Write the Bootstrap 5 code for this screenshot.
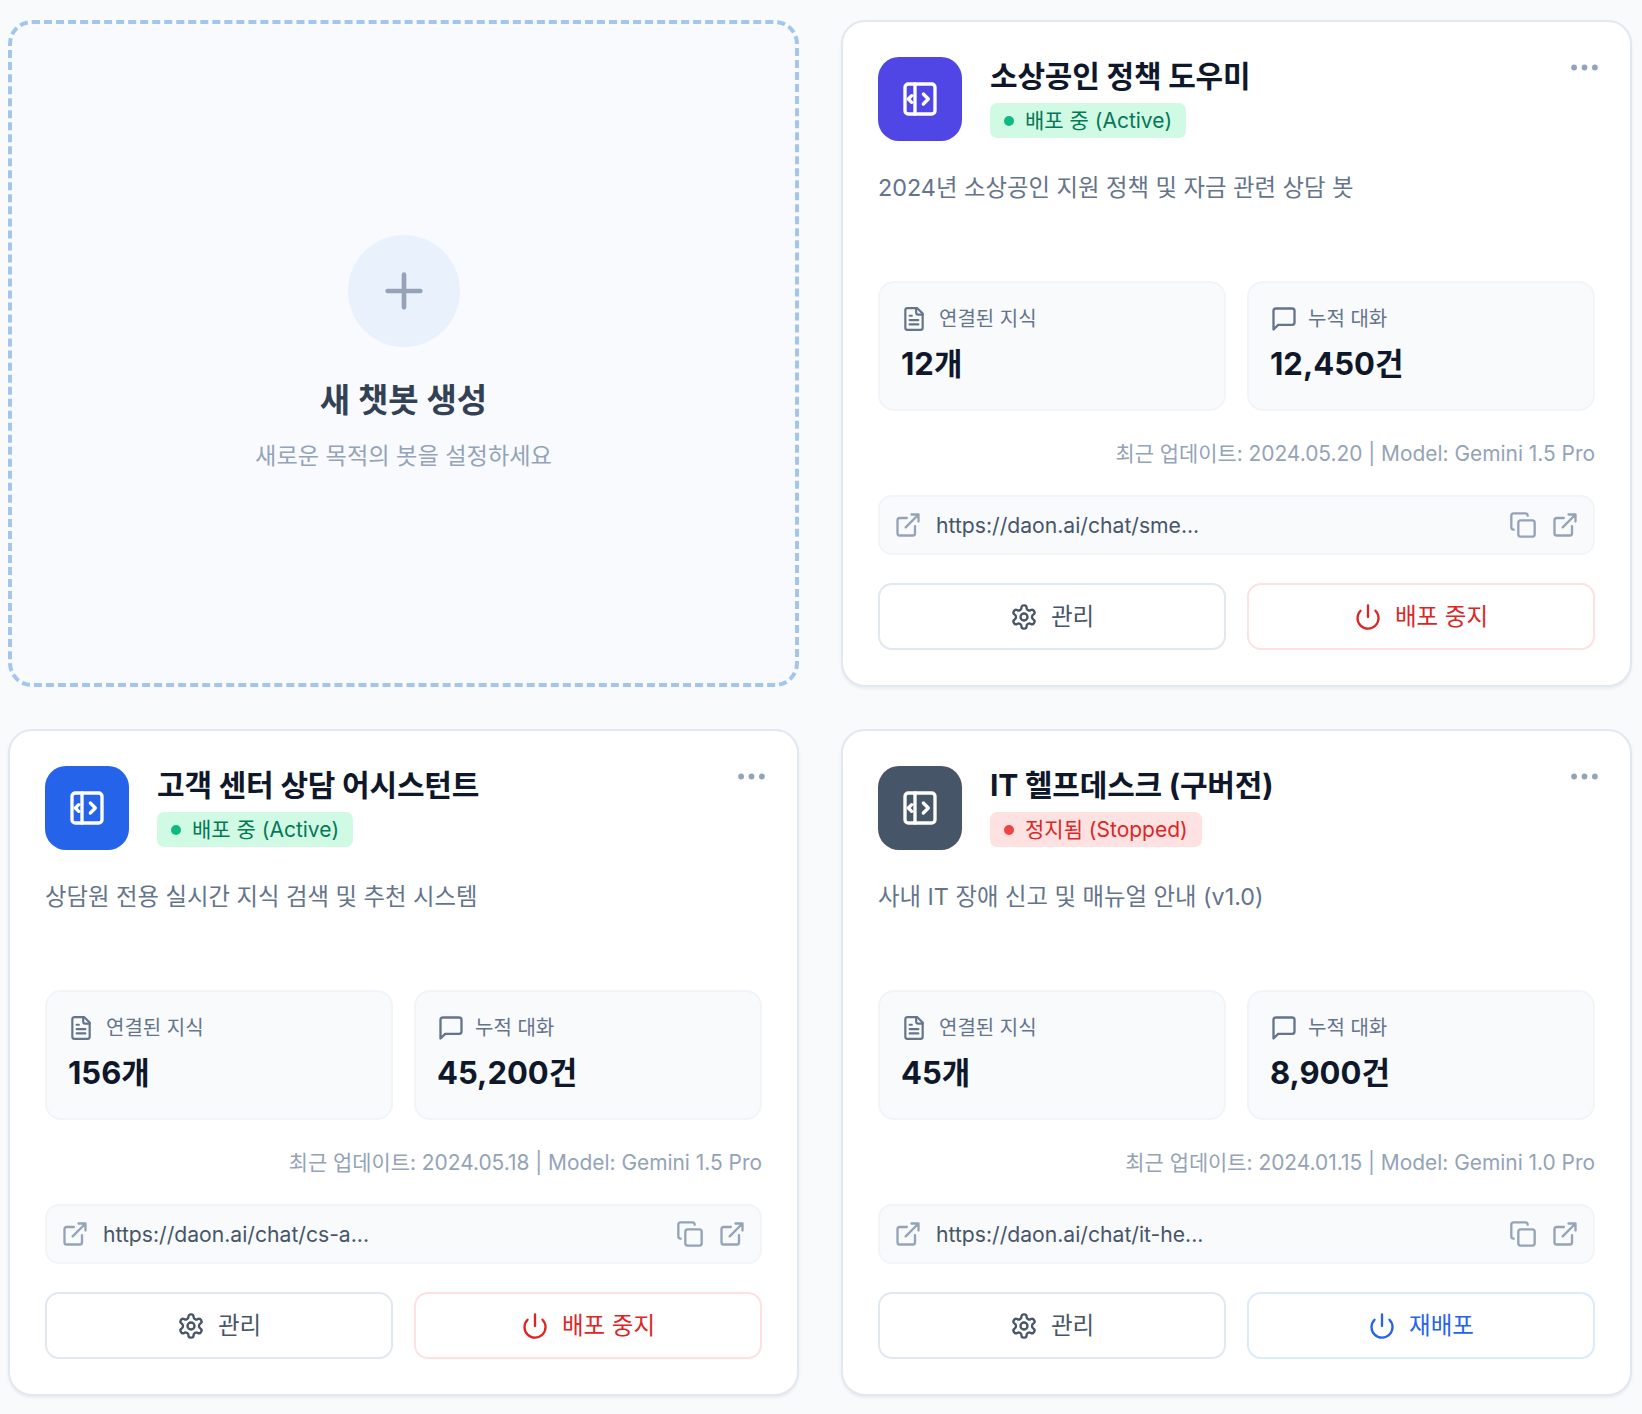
<!DOCTYPE html>
<html lang="ko">
<head>
<meta charset="utf-8">
<title>챗봇 관리</title>
<link href="https://cdn.jsdelivr.net/npm/bootstrap@5.3.0/dist/css/bootstrap.min.css" rel="stylesheet">
<style>
body{background:#f8fafc;font-family:Inter,"Noto Sans CJK KR",sans-serif;color:#0f172a}
.bot-grid{display:grid;grid-template-columns:791px 791px;gap:42px 42px;padding:20px 10px 20px 8px}
.bot-card{height:667px;border:2px solid #e2e8f0;border-radius:24px;padding:35px;background:#fff;box-shadow:0 2px 3px rgba(15,23,42,.06)}
.add-card{height:667px;border:4px dashed #a3c6ef;border-radius:24px;background:#f8fafe}
.add-circle{width:112px;height:112px;border-radius:50%;background:#e9f1fc;color:#94a3b8}
.add-title{font-size:33px;font-weight:700;color:#334155;margin:31px 0 0;line-height:44px}
.add-sub{font-size:23.2px;color:#94a3b8;margin:17px 0 0;line-height:34px}
.bot-icon{width:84px;height:84px;border-radius:21px;color:#fff;flex:none}
.ic-indigo{background:#4f46e5}.ic-blue{background:#2563eb}.ic-slate{background:#475569}
.bot-head-row{gap:28px}
.bot-title{font-size:30px;font-weight:700;line-height:38px;margin:0 0 8px;letter-spacing:-.2px}
.bot-status{display:inline-flex;align-items:center;gap:11px;height:35px;padding:0 14px;border-radius:7px;font-size:21px}
.st-on{background:#d1fae5;color:#047857}.st-off{background:#fee2e2;color:#dc2626}
.st-dot{width:10px;height:10px;border-radius:50%}
.st-on .st-dot{background:#10b981}.st-off .st-dot{background:#ef4444}
.more-btn{top:7px;right:-3px;line-height:0;position:absolute}
.bot-desc{font-size:23.35px;color:#64748b;line-height:34px;margin:30px 0 0;height:111px}
.stat-row,.act-row{display:grid;grid-template-columns:1fr 1fr;gap:21px}
.stat-box{height:130px;border:2px solid #f1f5f9;border-radius:16px;background:#f8fafc;padding:21px 21px}
.stat-label{font-size:20px;color:#64748b;line-height:30px}
.stat-msg{margin-left:2px}
.stat-val{font-size:31px;font-weight:700;line-height:44px;margin-top:8px}
.bot-meta{font-size:20.9px;color:#94a3b8;text-align:right;line-height:30px;margin:28px 0 0}
.url-box{height:60px;margin-top:26px;border:2px solid #f1f5f9;border-radius:14px;background:#f8fafc;padding:0 14px 0 14px;color:#94a3b8}
.url-text{font-size:21.15px;color:#475569;margin-left:14px;padding-top:2px}
.url-tools{gap:14px}
.act-row{margin-top:28px}
.act-btn{height:67px;border-width:2px;border-radius:14px;font-size:23.5px;background:#fff;gap:13px}
.act-manage{border-color:#e2e8f0;color:#475569}
.act-stop{border-color:#fee2e2;color:#dc2626}
.act-run{border-color:#dbeafe;color:#2563eb}
.ico{fill:none;stroke:currentColor;stroke-width:2;stroke-linecap:round;stroke-linejoin:round;flex:none}
</style>
</head>
<body>
<svg width="0" height="0" class="d-none">
<symbol id="i-panel" viewBox="0 0 24 24"><rect x="3" y="3" width="18" height="18" rx="2"/><path d="M9 3v18M7 10l-2 2 2 2M14 9l3 3-3 3"/></symbol>
<symbol id="i-file" viewBox="0 0 24 24"><path d="M15 2H6a2 2 0 0 0-2 2v16a2 2 0 0 0 2 2h12a2 2 0 0 0 2-2V7z"/><path d="M14 2v4a2 2 0 0 0 2 2h4M10 9H8M16 13H8M16 17H8"/></symbol>
<symbol id="i-msg" viewBox="0 0 24 24"><path d="M21 15a2 2 0 0 1-2 2H7l-4 4V5a2 2 0 0 1 2-2h14a2 2 0 0 1 2 2z"/></symbol>
<symbol id="i-ext" viewBox="0 0 24 24"><path d="M15 3h6v6M10 14 21 3M18 13v6a2 2 0 0 1-2 2H5a2 2 0 0 1-2-2V8a2 2 0 0 1 2-2h6"/></symbol>
<symbol id="i-copy" viewBox="0 0 24 24"><rect x="8" y="8" width="14" height="14" rx="2"/><path d="M4 16c-1.100 0-2-.9-2-2V4c0-1.100.9-2 2-2h10c1.100 0 2 .9 2 2"/></symbol>
<symbol id="i-gear" viewBox="0 0 24 24"><path d="M12.220 2h-.44a2 2 0 0 0-2 2v.18a2 2 0 0 1-1 1.730l-.43.25a2 2 0 0 1-2 0l-.15-.08a2 2 0 0 0-2.730.73l-.22.38a2 2 0 0 0 .73 2.730l.15.1a2 2 0 0 1 1 1.720v.51a2 2 0 0 1-1 1.740l-.15.09a2 2 0 0 0-.73 2.730l.22.38a2 2 0 0 0 2.730.73l.15-.08a2 2 0 0 1 2 0l.43.25a2 2 0 0 1 1 1.730V20a2 2 0 0 0 2 2h.44a2 2 0 0 0 2-2v-.18a2 2 0 0 1 1-1.730l.43-.25a2 2 0 0 1 2 0l.15.08a2 2 0 0 0 2.730-.73l.22-.39a2 2 0 0 0-.73-2.730l-.15-.08a2 2 0 0 1-1-1.740v-.5a2 2 0 0 1 1-1.740l.15-.09a2 2 0 0 0 .73-2.730l-.22-.38a2 2 0 0 0-2.730-.73l-.15.08a2 2 0 0 1-2 0l-.43-.25a2 2 0 0 1-1-1.730V4a2 2 0 0 0-2-2z"/><circle cx="12" cy="12" r="3"/></symbol>
<symbol id="i-power" viewBox="0 0 24 24"><path d="M12 2v10M18.400 6.600a9 9 0 1 1-12.770.04"/></symbol>
<symbol id="i-dots" viewBox="0 0 26 6"><circle cx="3" cy="3" r="2.800"/><circle cx="13" cy="3" r="2.800"/><circle cx="23" cy="3" r="2.800"/></symbol>
</svg>

<main class="bot-grid">
  <section class="add-card d-flex flex-column align-items-center justify-content-center">
    <div class="add-circle d-flex align-items-center justify-content-center">
      <svg class="ico" width="56" height="56" viewBox="0 0 24 24"><path d="M5 12h14M12 5v14"/></svg>
    </div>
    <h3 class="add-title">새 챗봇 생성</h3>
    <p class="add-sub">새로운 목적의 봇을 설정하세요</p>
  </section>

  <article class="bot-card d-flex flex-column">
    <div class="d-flex bot-head-row position-relative">
      <div class="bot-icon ic-indigo d-flex align-items-center justify-content-center"><svg class="ico" width="40" height="40"><use href="#i-panel"/></svg></div>
      <div class="bot-head">
        <h4 class="bot-title">소상공인 정책 도우미</h4>
        <span class="bot-status st-on"><span class="st-dot"></span>배포 중 (Active)</span>
      </div>
      <svg class="more-btn" width="27" height="7" fill="#94a3b8"><use href="#i-dots"/></svg>
    </div>
    <p class="bot-desc">2024년 소상공인 지원 정책 및 자금 관련 상담 봇</p>
    <div class="stat-row">
      <div class="stat-box"><div class="stat-label d-flex align-items-center gap-2"><svg class="ico" width="26" height="26"><use href="#i-file"/></svg><span class="ms-1">연결된 지식</span></div><div class="stat-val">12개</div></div>
      <div class="stat-box"><div class="stat-label d-flex align-items-center gap-2"><svg class="ico" width="28" height="28"><use href="#i-msg"/></svg><span class="stat-msg">누적 대화</span></div><div class="stat-val">12,450건</div></div>
    </div>
    <p class="bot-meta">최근 업데이트: 2024.05.20 | Model: Gemini 1.5 Pro</p>
    <div class="url-box d-flex align-items-center">
      <svg class="ico" width="28" height="28"><use href="#i-ext"/></svg>
      <span class="url-text flex-grow-1">https://daon.ai/chat/sme...</span>
      <div class="d-flex align-items-center url-tools"><svg class="ico" width="28" height="28"><use href="#i-copy"/></svg><svg class="ico" width="28" height="28"><use href="#i-ext"/></svg></div>
    </div>
    <div class="act-row">
      <button class="btn act-btn act-manage d-flex align-items-center justify-content-center"><svg class="ico" width="28" height="28"><use href="#i-gear"/></svg>관리</button>
      <button class="btn act-btn act-stop d-flex align-items-center justify-content-center"><svg class="ico" width="28" height="28"><use href="#i-power"/></svg>배포 중지</button>
    </div>
  </article>

  <article class="bot-card d-flex flex-column">
    <div class="d-flex bot-head-row position-relative">
      <div class="bot-icon ic-blue d-flex align-items-center justify-content-center"><svg class="ico" width="40" height="40"><use href="#i-panel"/></svg></div>
      <div class="bot-head">
        <h4 class="bot-title">고객 센터 상담 어시스턴트</h4>
        <span class="bot-status st-on"><span class="st-dot"></span>배포 중 (Active)</span>
      </div>
      <svg class="more-btn" width="27" height="7" fill="#94a3b8"><use href="#i-dots"/></svg>
    </div>
    <p class="bot-desc">상담원 전용 실시간 지식 검색 및 추천 시스템</p>
    <div class="stat-row">
      <div class="stat-box"><div class="stat-label d-flex align-items-center gap-2"><svg class="ico" width="26" height="26"><use href="#i-file"/></svg><span class="ms-1">연결된 지식</span></div><div class="stat-val">156개</div></div>
      <div class="stat-box"><div class="stat-label d-flex align-items-center gap-2"><svg class="ico" width="28" height="28"><use href="#i-msg"/></svg><span class="stat-msg">누적 대화</span></div><div class="stat-val">45,200건</div></div>
    </div>
    <p class="bot-meta">최근 업데이트: 2024.05.18 | Model: Gemini 1.5 Pro</p>
    <div class="url-box d-flex align-items-center">
      <svg class="ico" width="28" height="28"><use href="#i-ext"/></svg>
      <span class="url-text flex-grow-1">https://daon.ai/chat/cs-a...</span>
      <div class="d-flex align-items-center url-tools"><svg class="ico" width="28" height="28"><use href="#i-copy"/></svg><svg class="ico" width="28" height="28"><use href="#i-ext"/></svg></div>
    </div>
    <div class="act-row">
      <button class="btn act-btn act-manage d-flex align-items-center justify-content-center"><svg class="ico" width="28" height="28"><use href="#i-gear"/></svg>관리</button>
      <button class="btn act-btn act-stop d-flex align-items-center justify-content-center"><svg class="ico" width="28" height="28"><use href="#i-power"/></svg>배포 중지</button>
    </div>
  </article>

  <article class="bot-card d-flex flex-column">
    <div class="d-flex bot-head-row position-relative">
      <div class="bot-icon ic-slate d-flex align-items-center justify-content-center"><svg class="ico" width="40" height="40"><use href="#i-panel"/></svg></div>
      <div class="bot-head">
        <h4 class="bot-title">IT 헬프데스크 (구버전)</h4>
        <span class="bot-status st-off"><span class="st-dot"></span>정지됨 (Stopped)</span>
      </div>
      <svg class="more-btn" width="27" height="7" fill="#94a3b8"><use href="#i-dots"/></svg>
    </div>
    <p class="bot-desc">사내 IT 장애 신고 및 매뉴얼 안내 (v1.0)</p>
    <div class="stat-row">
      <div class="stat-box"><div class="stat-label d-flex align-items-center gap-2"><svg class="ico" width="26" height="26"><use href="#i-file"/></svg><span class="ms-1">연결된 지식</span></div><div class="stat-val">45개</div></div>
      <div class="stat-box"><div class="stat-label d-flex align-items-center gap-2"><svg class="ico" width="28" height="28"><use href="#i-msg"/></svg><span class="stat-msg">누적 대화</span></div><div class="stat-val">8,900건</div></div>
    </div>
    <p class="bot-meta">최근 업데이트: 2024.01.15 | Model: Gemini 1.0 Pro</p>
    <div class="url-box d-flex align-items-center">
      <svg class="ico" width="28" height="28"><use href="#i-ext"/></svg>
      <span class="url-text flex-grow-1">https://daon.ai/chat/it-he...</span>
      <div class="d-flex align-items-center url-tools"><svg class="ico" width="28" height="28"><use href="#i-copy"/></svg><svg class="ico" width="28" height="28"><use href="#i-ext"/></svg></div>
    </div>
    <div class="act-row">
      <button class="btn act-btn act-manage d-flex align-items-center justify-content-center"><svg class="ico" width="28" height="28"><use href="#i-gear"/></svg>관리</button>
      <button class="btn act-btn act-run d-flex align-items-center justify-content-center"><svg class="ico" width="28" height="28"><use href="#i-power"/></svg>재배포</button>
    </div>
  </article>
</main>
<script src="https://cdn.jsdelivr.net/npm/bootstrap@5.3.0/dist/js/bootstrap.bundle.min.js"></script>
</body>
</html>
